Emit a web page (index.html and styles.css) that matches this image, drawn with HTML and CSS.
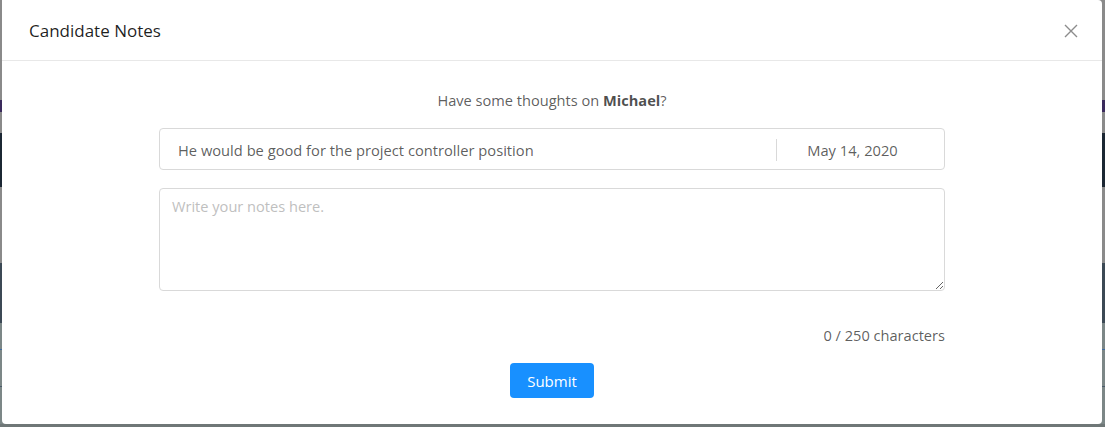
FILE: index.html
```html
<!DOCTYPE html>
<html lang="en">
<head>
<meta charset="utf-8">
<title>Candidate Notes</title>
<link rel="stylesheet" href="styles.css">
</head>
<body>
<div class="backdrop">
  <div class="modal" role="dialog" aria-labelledby="modal-title">
    <header class="modal-header">
      <h2 id="modal-title" class="modal-title">Candidate Notes</h2>
      <button class="modal-close" aria-label="Close">
        <svg width="14" height="14" viewBox="0 0 14 14" aria-hidden="true">
          <path d="M1 1L13 13M13 1L1 13" stroke="#8c8c8c" stroke-width="1.4" fill="none"/>
        </svg>
      </button>
    </header>
    <div class="modal-body">
      <p class="prompt">Have some thoughts on <strong>Michael</strong>?</p>
      <div class="note-row">
        <span class="note-text">He would be good for the project controller position</span>
        <span class="note-sep"></span>
        <span class="note-date">May 14, 2020</span>
      </div>
      <textarea class="notes-input" placeholder="Write your notes here."></textarea>
      <div class="counter">0 / 250 characters</div>
      <button class="submit-btn">Submit</button>
    </div>
  </div>
</div>
</body>
</html>
```

FILE: styles.css
```css
* { box-sizing: border-box; }

html, body {
  margin: 0;
  height: 100%;
}

body {
  font-family: "Open Sans", "Noto Sans", sans-serif;
  background:
    linear-gradient(to bottom,
      #8a8a8a 0px, #8a8a8a 100px,
      #3a2a5c 100px, #3a2a5c 112px,
      #8a8a8a 112px, #8a8a8a 133px,
      #1b2733 133px, #1b2733 187px,
      #8a8a8a 187px, #8a8a8a 263px,
      #3c4955 263px, #3c4955 323px,
      #7c8787 323px, #7c8787 349px,
      #3f6aa0 349px, #3f6aa0 350px,
      #7c8787 350px, #7c8787 386px,
      #4a5a6a 386px, #4a5a6a 387px,
      #7c8787 387px, #7c8787 424px,
      #6f7777 424px);
  overflow: hidden;
}

.backdrop {
  padding: 0 3px 3px 2px;
}

.modal {
  width: 1100px;
  height: 424px;
  background: #ffffff;
  border-radius: 0 4px 4px 4px;
  display: flex;
  flex-direction: column;
}

.modal-header {
  height: 61px;
  border-bottom: 1px solid #e8e8e8;
  display: flex;
  align-items: center;
  justify-content: space-between;
  padding: 1px 24px 0 27px;
}

.modal-title {
  margin: 0;
  font-size: 17px;
  font-weight: 500;
  color: rgba(0, 0, 0, 0.88);
}

.modal-close {
  border: 0;
  background: none;
  padding: 0;
  width: 14px;
  height: 14px;
  display: flex;
  cursor: pointer;
}

.modal-body {
  padding: 28px 157px 0;
  display: flex;
  flex-direction: column;
  align-items: stretch;
}

.prompt {
  margin: 0;
  text-align: center;
  font-size: 14.6px;
  line-height: 22px;
  color: rgba(0, 0, 0, 0.65);
}

.prompt strong {
  font-weight: 700;
  color: rgba(0, 0, 0, 0.7);
}

.note-row {
  margin-top: 17px;
  height: 42px;
  border: 1px solid #d9d9d9;
  border-radius: 4px;
  display: flex;
  align-items: center;
  padding: 1px 18px 0;
  font-size: 14.7px;
  color: rgba(0, 0, 0, 0.65);
}

.note-text {
  flex: 1;
}

.note-sep {
  width: 1px;
  height: 22px;
  background: #d9d9d9;
}

.note-date {
  width: 149px;
  text-align: center;
  padding-left: 2px;
}

.notes-input {
  margin-top: 18px;
  height: 103px;
  border: 1px solid #d9d9d9;
  border-radius: 4px;
  padding: 6px 12px;
  font-family: inherit;
  font-size: 14.6px;
  line-height: 22px;
  color: rgba(0, 0, 0, 0.65);
  resize: vertical;
  outline: none;
}

.notes-input::placeholder {
  color: #bfbfbf;
}

.counter {
  margin-top: 33px;
  text-align: right;
  font-size: 14.6px;
  line-height: 22px;
  color: rgba(0, 0, 0, 0.65);
}

.submit-btn {
  align-self: center;
  margin-top: 17px;
  width: 84px;
  height: 35px;
  border: 0;
  border-radius: 4px;
  background: #1890ff;
  color: #ffffff;
  font-family: inherit;
  font-size: 15px;
  cursor: pointer;
}
```
